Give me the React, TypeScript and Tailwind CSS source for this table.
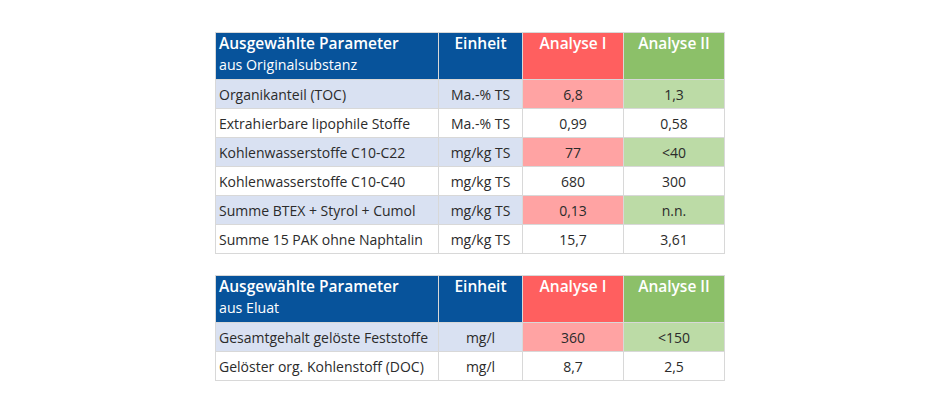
const font = { fontFamily: '"Open Sans", "Noto Sans", sans-serif' }

type Row = { name: string; unit: string; a1: string; a2: string }

const tables: { sub: string; rows: Row[] }[] = [
  {
    sub: 'aus Originalsubstanz',
    rows: [
      { name: 'Organikanteil (TOC)', unit: 'Ma.-% TS', a1: '6,8', a2: '1,3' },
      { name: 'Extrahierbare lipophile Stoffe', unit: 'Ma.-% TS', a1: '0,99', a2: '0,58' },
      { name: 'Kohlenwasserstoffe C10-C22', unit: 'mg/kg TS', a1: '77', a2: '<40' },
      { name: 'Kohlenwasserstoffe C10-C40', unit: 'mg/kg TS', a1: '680', a2: '300' },
      { name: 'Summe BTEX + Styrol + Cumol', unit: 'mg/kg TS', a1: '0,13', a2: 'n.n.' },
      { name: 'Summe 15 PAK ohne Naphtalin', unit: 'mg/kg TS', a1: '15,7', a2: '3,61' },
    ],
  },
  {
    sub: 'aus Eluat',
    rows: [
      { name: 'Gesamtgehalt gelöste Feststoffe', unit: 'mg/l', a1: '360', a2: '<150' },
      { name: 'Gelöster org. Kohlenstoff (DOC)', unit: 'mg/l', a1: '8,7', a2: '2,5' },
    ],
  },
]

function ParamTable({ sub, rows }: { sub: string; rows: Row[] }) {
  return (
    <div className="grid w-[510px] grid-cols-[222px_83px_100px_100px] gap-px bg-[#d8d8d8] p-px">
      <div className="h-[46px] bg-[#07539b] pl-[3px] text-white">
        <div className="text-[15.5px] font-semibold leading-[21px]">Ausgewählte Parameter</div>
        <div className="text-[14.2px] leading-[21px]">{sub}</div>
      </div>
      <div className="bg-[#07539b] text-center text-[15.5px] font-semibold leading-[21px] text-white">Einheit</div>
      <div className="bg-[#ff5f5f] text-center text-[15.5px] font-semibold leading-[21px] text-white">Analyse I</div>
      <div className="bg-[#8cc069] text-center text-[15.5px] font-semibold leading-[21px] text-white">Analyse II</div>
      {rows.map((r, i) => {
        const shade = i % 2 === 0
        return [
          <div key={r.name + 'n'} className={`flex h-[28px] items-center pl-[3px] ${shade ? 'bg-[#d9e1f2]' : 'bg-white'}`}>
            {r.name}
          </div>,
          <div key={r.name + 'u'} className={`flex h-[28px] items-center justify-center ${shade ? 'bg-[#d9e1f2]' : 'bg-white'}`}>
            {r.unit}
          </div>,
          <div key={r.name + 'a'} className={`flex h-[28px] items-center justify-center ${shade ? 'bg-[#ffa3a3]' : 'bg-white'}`}>
            {r.a1}
          </div>,
          <div key={r.name + 'b'} className={`flex h-[28px] items-center justify-center ${shade ? 'bg-[#bcdba6]' : 'bg-white'}`}>
            {r.a2}
          </div>,
        ]
      })}
    </div>
  )
}

export default function App() {
  return (
    <div className="h-[412px] w-[940px] bg-white pt-8 text-[14px] text-[#2b2b2b]" style={font}>
      <div className="flex flex-col items-center gap-[21px]">
        {tables.map(t => (
          <ParamTable key={t.sub} sub={t.sub} rows={t.rows} />
        ))}
      </div>
    </div>
  )
}
